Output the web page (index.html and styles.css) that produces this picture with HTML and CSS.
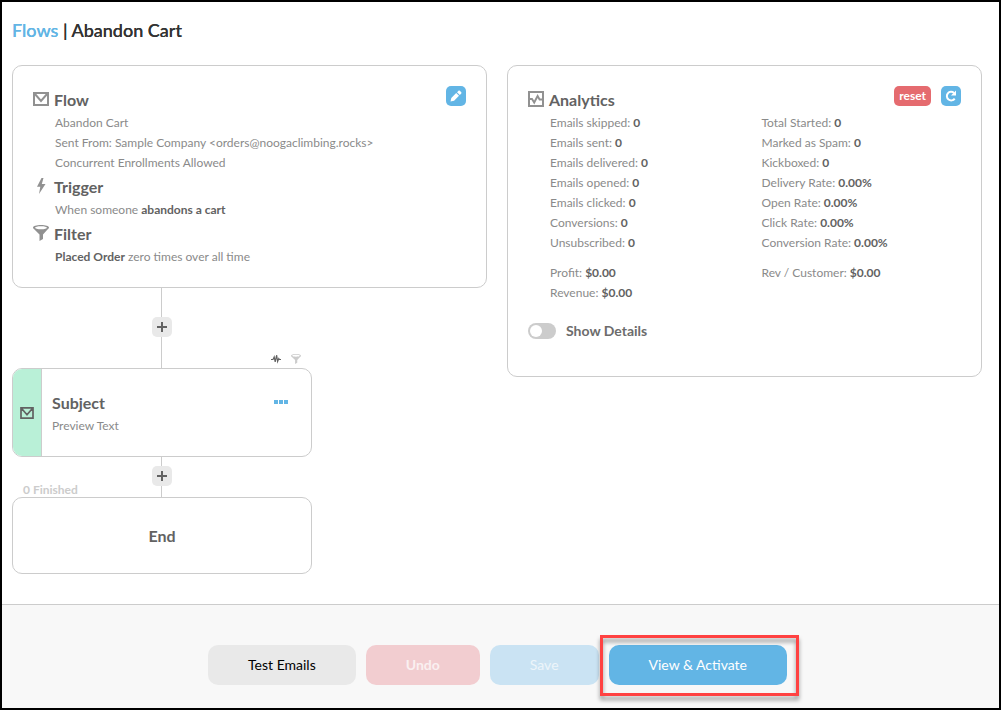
FILE: index.html
```html
<!DOCTYPE html>
<html lang="en">
<head>
<meta charset="utf-8">
<meta name="viewport" content="width=device-width, initial-scale=1">
<title>Flows | Abandon Cart</title>
<link rel="stylesheet" href="styles.css">
</head>
<body>
<svg class="sprite" aria-hidden="true">
  <symbol id="mail" viewBox="0 0 16 14"><path d="M1 1h14v12H1z M1.500 1.500L8 9l6.500-7.500" fill="none" stroke="currentColor" stroke-width="2"/></symbol>
  <symbol id="bolt" viewBox="0 0 16 16"><path d="M8.500 0L4 8.700h3.300L6 16l6.500-10H8.800L10.500 0z" fill="currentColor"/></symbol>
  <symbol id="funnel" viewBox="0 0 16 16"><path fill-rule="evenodd" d="M8 0c4.500 0 8 1.100 8 2.600 0 .700-.600 1.300-1.500 2L10 9.500V14l-3.500 2V9.500L1.500 4.600C.600 3.900 0 3.300 0 2.600 0 1.100 3.500 0 8 0zm0 1.200c-3.500 0-6 .700-6 1.500s2.500 1.500 6 1.500 6-.700 6-1.500-2.500-1.500-6-1.500z" fill="currentColor"/></symbol>
  <symbol id="chart" viewBox="0 0 16 16"><path d="M1 1h14v14H1z" fill="none" stroke="currentColor" stroke-width="2"/><path d="M1 8h3l2.200 3.500L9.600 5l2 3.500H15" fill="none" stroke="currentColor" stroke-width="1.900"/></symbol>
  <symbol id="pulse" viewBox="0 0 10 10"><path d="M0 5.500h2L3.200 3l1 5L5.600 1l1 6.500L7.800 4.500l.600 1H10" fill="none" stroke="currentColor" stroke-width="1.200"/></symbol>
  <symbol id="plus" viewBox="0 0 10 10"><path d="M0 5h10M5 0v10" fill="none" stroke="currentColor" stroke-width="2"/></symbol>
</svg>
<div class="app">
  <main class="main">
    <h1 class="title"><a href="#" class="title-link">Flows</a> | Abandon Cart</h1>
    <div class="columns">
      <div class="column">
        <section class="card">
          <button class="square" type="button" aria-label="Edit flow">
            <svg viewBox="0 0 12 12" width="12" height="12"><path d="M.5 11.500l.800-3.600L6.200 3 9 5.800l-4.900 4.900zM7 2.200l1.300-1.300c.500-.500 1.200-.500 1.700 0L11.100 2c.500.500.500 1.200 0 1.700L9.800 5z" fill="currentColor"/></svg>
          </button>
          <h2 class="heading"><svg class="icon mail"><use href="#mail"/></svg>Flow</h2>
          <div class="lines">
            <p>Abandon Cart</p>
            <p>Sent From: Sample Company &lt;orders@noogaclimbing.rocks&gt;</p>
            <p>Concurrent Enrollments Allowed</p>
          </div>
          <h2 class="heading"><svg class="icon"><use href="#bolt"/></svg>Trigger</h2>
          <div class="lines"><p>When someone <b>abandons a cart</b></p></div>
          <h2 class="heading"><svg class="icon"><use href="#funnel"/></svg>Filter</h2>
          <div class="lines"><p><b>Placed Order</b> zero times over all time</p></div>
        </section>
        <div class="path">
          <div class="connector long"><button class="add" type="button" aria-label="Add step"><svg class="plus"><use href="#plus"/></svg></button>
            <div class="badges"><svg class="badge dark"><use href="#pulse"/></svg><svg class="badge"><use href="#funnel"/></svg></div>
          </div>
          <section class="node">
            <div class="node-side"><svg class="node-icon"><use href="#mail"/></svg></div>
            <div class="node-body">
              <h2 class="node-title">Subject</h2>
              <p>Preview Text</p>
            </div>
            <button class="more" type="button" aria-label="More options"><svg viewBox="0 0 15 4" width="15" height="4"><path d="M0 0h4v4H0zM5 0h4v4H5zM10 0h4v4h-4z" fill="currentColor"/></svg></button>
          </section>
          <div class="connector"><button class="add" type="button" aria-label="Add step"><svg class="plus"><use href="#plus"/></svg></button>
            <span class="finished">0 Finished</span>
          </div>
          <section class="node end"><h2 class="node-title">End</h2></section>
        </div>
      </div>
      <section class="card">
        <div class="actions">
          <button class="square reset" type="button">reset</button>
          <button class="square" type="button" aria-label="Refresh">
            <svg viewBox="0 0 12 12" width="12" height="12"><path d="M9.700 8.600A4.300 4.300 0 1 1 9 2.900" fill="none" stroke="currentColor" stroke-width="2"/><path d="M11 .5v5H6z" fill="currentColor"/></svg>
          </button>
        </div>
        <h2 class="heading"><svg class="icon"><use href="#chart"/></svg>Analytics</h2>
        <div class="lines stats">
          <div>
            <p>Emails skipped: <b>0</b></p>
            <p>Emails sent: <b>0</b></p>
            <p>Emails delivered: <b>0</b></p>
            <p>Emails opened: <b>0</b></p>
            <p>Emails clicked: <b>0</b></p>
            <p>Conversions: <b>0</b></p>
            <p>Unsubscribed: <b>0</b></p>
          </div>
          <div>
            <p>Total Started: <b>0</b></p>
            <p>Marked as Spam: <b>0</b></p>
            <p>Kickboxed: <b>0</b></p>
            <p>Delivery Rate: <b>0.00%</b></p>
            <p>Open Rate: <b>0.00%</b></p>
            <p>Click Rate: <b>0.00%</b></p>
            <p>Conversion Rate: <b>0.00%</b></p>
          </div>
          <div>
            <p>Profit: <b>$0.00</b></p>
            <p>Revenue: <b>$0.00</b></p>
          </div>
          <div><p>Rev / Customer: <b>$0.00</b></p></div>
        </div>
        <label class="details"><input class="switch" type="checkbox">Show Details</label>
      </section>
    </div>
  </main>
  <footer class="footer">
    <button class="button" type="button">Test Emails</button>
    <button class="button undo" type="button" disabled>Undo</button>
    <button class="button save" type="button" disabled>Save</button>
    <div class="spotlight"><button class="button activate" type="button">View &amp; Activate</button></div>
  </footer>
</div>
</body>
</html>
```
FILE: styles.css
```css
* { box-sizing: border-box; }
body {
  margin: 0;
  font: 12px/20px Lato, sans-serif;
  color: #8a8a8a;
  background: #fff;
}
h1, h2, p { margin: 0; }
b { color: #626262; }
button { font-family: inherit; border: 0; padding: 0; cursor: pointer; }
.sprite { position: absolute; width: 0; height: 0; }
.app {
  min-height: 100vh;
  border: 2px solid #000;
  display: flex;
  flex-direction: column;
}
.main { flex: 1; padding: 15px 17px 30px 10px; }
.title {
  font-size: 18px;
  line-height: 26px;
  font-weight: 500;
  color: #333;
  text-shadow: 0 0 0 currentColor;
  margin-bottom: 22px;
}
.title-link { color: #62b5e5; text-decoration: none; text-shadow: 0 0 0 currentColor; }
.columns {
  display: grid;
  grid-template-columns: 1fr 1fr;
  gap: 20px;
  align-items: start;
}
.card {
  position: relative;
  border: 1px solid #ccc;
  border-radius: 10px;
  padding: 20px;
}
.card > .square, .actions { position: absolute; top: 20px; right: 20px; }
.actions { display: flex; gap: 10px; }
.square {
  min-width: 20px;
  height: 20px;
  border-radius: 5px;
  background: #62b5e5;
  color: #fff;
  display: flex;
  align-items: center;
  justify-content: center;
}
.reset { background: #e56b6f; padding: 0 5px 2px; font-size: 12px; font-weight: 700; }
.heading {
  display: flex;
  align-items: center;
  gap: 5px;
  font-size: 16px;
  line-height: 27px;
  color: #626262;
}
.icon { width: 16px; height: 16px; color: #919191; margin-bottom: 1px; }
.icon.mail { height: 14px; }
.lines { padding-left: 22px; }
.stats { display: grid; grid-template-columns: 1fr 1fr; gap: 10px 12px; }
.details {
  display: flex;
  align-items: center;
  gap: 10px;
  margin: 18px 0 15px;
  font-size: 14px;
  font-weight: 700;
  color: #6c6c6c;
}
.switch {
  appearance: none;
  width: 28px;
  height: 16px;
  margin: 0;
  border-radius: 8px;
  background: #ccc;
  display: flex;
  align-items: center;
  padding: 2px;
}
.switch::before {
  content: "";
  width: 12px;
  height: 12px;
  border-radius: 50%;
  background: #fff;
}
.switch:checked { background: #62b5e5; justify-content: flex-end; }
.path { max-width: 300px; }
.connector {
  position: relative;
  height: 40px;
  padding-top: 9px;
  display: flex;
  justify-content: center;
  background: linear-gradient(#ccc, #ccc) calc(50% - 1px) 0 / 1px 100% no-repeat;
}
.connector.long { height: 80px; padding-top: 29px; }
.add {
  width: 20px;
  height: 20px;
  border-radius: 5px;
  background: #e9e9e9;
  color: #626262;
  display: flex;
  align-items: center;
  justify-content: center;
}
.plus { width: 10px; height: 10px; }
.badges { position: absolute; right: 11px; bottom: 4px; display: flex; gap: 10px; }
.badge { width: 10px; height: 10px; color: #ccc; }
.badge.dark { color: #626262; }
.finished {
  position: absolute;
  left: 11px;
  bottom: -1px;
  line-height: 16px;
  font-weight: 700;
  color: #ccc;
}
.node {
  display: flex;
  min-height: 89px;
  border: 1px solid #ccc;
  border-radius: 10px;
  overflow: hidden;
}
.node-side {
  width: 29px;
  background: #b9f0d7;
  border-right: 1px solid #ccc;
  display: flex;
  align-items: center;
  justify-content: center;
}
.node-icon { width: 14px; height: 12px; color: #626262; }
.node-body { flex: 1; padding: 21px 10px 20px; }
.node-title { font-size: 16px; line-height: 26px; color: #626262; }
.more { align-self: flex-start; margin: 23px 22px 0 0; height: 20px; background: none; color: #62b5e5; display: flex; align-items: center; }
.end { min-height: 77px; align-items: center; justify-content: center; }
.footer {
  display: flex;
  justify-content: center;
  gap: 10px;
  padding: 40px 6px 23px 0;
  border-top: 1px solid #ccc;
  background: #f8f8f8;
}
.button {
  height: 40px;
  padding: 0 40px 2px;
  border-radius: 10px;
  background: #e9e9e9;
  color: #000;
  font-size: 14px;
}
.undo { background: #f2cdd0; color: #faf0f1; font-weight: 700; }
.save { background: #cae3f3; color: #edf5fa; }
.activate { background: #62b5e5; color: #fff; }
.spotlight { position: relative; }
.spotlight::after {
  content: "";
  position: absolute;
  inset: -10px -12px -11px -9px;
  border: 3px solid #ff4242;
  filter: drop-shadow(0 4px 2px rgba(0, 0, 0, 0.4));
  pointer-events: none;
}
```
